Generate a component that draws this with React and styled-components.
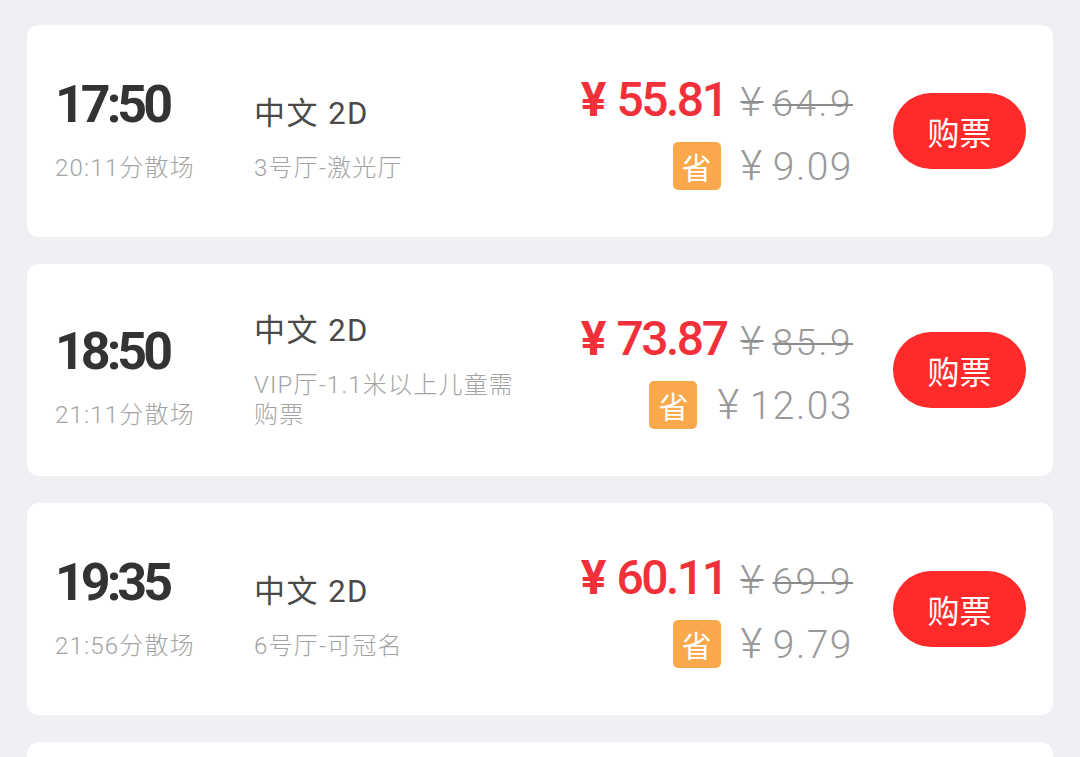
import React from 'react';
import styled, { createGlobalStyle } from 'styled-components';

const GlobalStyle = createGlobalStyle`
    body {
        margin: 0;
        background: #eef0f3;
        font-family: Roboto, "Noto Sans CJK SC", sans-serif;
    }
`;

const shows = [
    { time: '17:50', end: '20:11分散场', lang: '中文 2D', hall: '3号厅-激光厅', price: '55.81', origin: '64.9', save: '9.09' },
    { time: '18:50', end: '21:11分散场', lang: '中文 2D', hall: 'VIP厅-1.1米以上儿童需购票', price: '73.87', origin: '85.9', save: '12.03' },
    { time: '19:35', end: '21:56分散场', lang: '中文 2D', hall: '6号厅-可冠名', price: '60.11', origin: '69.9', save: '9.79' },
    { time: '20:30', end: '22:51分散场', lang: '中文 2D', hall: '3号厅-激光厅', price: '55.81', origin: '64.9', save: '9.09' },
];

function App() {
    return (
        <>
            <GlobalStyle />
            <Page>
                {shows.map((s, i) => (
                    <Card key={i}>
                        <Info>
                            <TimeCol>
                                <Time>{s.time}</Time>
                                <SubText>{s.end}</SubText>
                            </TimeCol>
                            <HallCol>
                                <Lang>{s.lang}</Lang>
                                <SubText>{s.hall}</SubText>
                            </HallCol>
                        </Info>
                        <PriceCol>
                            <PriceRow>
                                <Price><Yen>¥</Yen>{s.price}</Price>
                                <Origin><GrayYen>¥</GrayYen>{s.origin}</Origin>
                            </PriceRow>
                            <SaveRow>
                                <Badge>省</Badge>
                                <Save><GrayYen>¥</GrayYen>{s.save}</Save>
                            </SaveRow>
                        </PriceCol>
                        <BuyButton>购票</BuyButton>
                    </Card>
                ))}
            </Page>
        </>
    );
}

const Page = styled.div`
    display: flex;
    flex-direction: column;
    gap: 27px;
    padding: 25px 27px 0;
    height: 757px;
    box-sizing: border-box;
    overflow: hidden;
`;

const Card = styled.div`
    flex: none;
    display: flex;
    align-items: center;
    height: 212px;
    padding: 0 27px 0 28px;
    background: #fff;
    border-radius: 12px;
    box-sizing: border-box;
`;

const Info = styled.div`
    display: flex;
    align-items: flex-end;
`;

const TimeCol = styled.div`
    width: 199px;
    display: flex;
    flex-direction: column;
`;

const Time = styled.div`
    font-size: 52px;
    line-height: 52px;
    font-weight: 700;
    color: #333;
    letter-spacing: -4px;
    margin-bottom: 22px;
`;

const SubText = styled.div`
    font-size: 24px;
    line-height: 30px;
    font-weight: 300;
    letter-spacing: 1.2px;
    color: #a3a3a3;
`;

const HallCol = styled.div`
    width: 268px;
    display: flex;
    flex-direction: column;
`;

const Lang = styled.div`
    font-size: 31px;
    line-height: 40px;
    letter-spacing: 1.5px;
    color: #4a4a4a;
    margin-bottom: 19px;
`;

const PriceCol = styled.div`
    margin-left: auto;
    display: flex;
    flex-direction: column;
    align-items: flex-end;
`;

const PriceRow = styled.div`
    display: flex;
    align-items: baseline;
    height: 56px;
`;

const Price = styled.span`
    font-size: 48px;
    font-weight: 500;
    color: #f2303a;
    letter-spacing: -2.5px;
    line-height: 56px;
`;

const Yen = styled.span`
    font-size: 48px;
    font-weight: 700;
    letter-spacing: 0;
    margin-right: 10px;
`;

const GrayYen = styled.span`
    font-size: 1.08em;
    margin-right: 9px;
`;

const Origin = styled.span`
    margin-left: 14px;
    font-size: 37px;
    font-weight: 300;
    color: #999;
    letter-spacing: 2.5px;
    text-decoration: line-through;
    text-decoration-thickness: 2px;
    text-decoration-color: #8c8c8c;
    line-height: 56px;
`;

const SaveRow = styled.div`
    display: flex;
    align-items: center;
    margin-top: 14px;
`;

const Badge = styled.span`
    width: 48px;
    height: 48px;
    border-radius: 5px;
    background: #f9a94b;
    color: #fff;
    font-size: 30px;
    display: flex;
    align-items: center;
    justify-content: center;
    font-family: "Noto Sans CJK SC", sans-serif;
`;

const Save = styled.span`
    margin-left: 20px;
    font-size: 39px;
    font-weight: 300;
    color: #999;
    letter-spacing: 1.5px;
    line-height: 48px;
`;

const BuyButton = styled.button`
    margin-left: 40px;
    width: 133px;
    height: 76px;
    border: none;
    border-radius: 38px;
    background: #ff2a2a;
    color: #fff;
    font-size: 32px;
    font-family: "Noto Sans CJK SC", sans-serif;
    padding: 0;
`;

export default App;
